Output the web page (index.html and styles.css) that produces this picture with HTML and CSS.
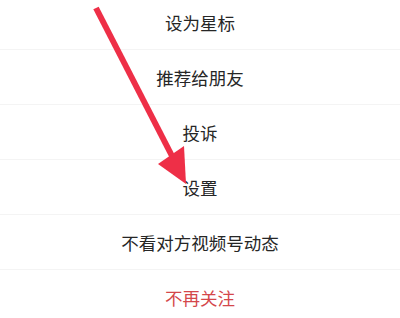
FILE: index.html
```html
<!DOCTYPE html>
<html lang="zh-CN">
<head>
  <meta charset="UTF-8">
  <meta name="viewport" content="width=device-width, initial-scale=1">
  <title>更多操作</title>
  <link rel="stylesheet" href="styles.css">
</head>
<body>
  <!-- Action sheet menu -->
  <ul class="menu">
    <li class="menu-item">设为星标</li>
    <li class="menu-item">推荐给朋友</li>
    <li class="menu-item">投诉</li>
    <li class="menu-item">设置</li>
    <li class="menu-item">不看对方视频号动态</li>
    <li class="menu-item danger">不再关注</li>
  </ul>

  <!-- Red annotation arrow pointing at "设置" -->
  <svg class="arrow" width="400" height="318" viewBox="0 0 400 318">
    <line x1="96" y1="8" x2="172" y2="156" stroke="#ee2f47" stroke-width="6" stroke-linecap="butt"/>
    <polygon points="158,164 184,146 186,184" fill="#ee2f47"/>
  </svg>
</body>
</html>
```
FILE: styles.css
```css
/* Base page */
body {
  margin: 0;
  background: #fff;
  font-family: "Noto Sans CJK SC", "Noto Sans", sans-serif;
  overflow: hidden;
}
/* Menu list, shifted so the first row is partly cut off at top */
.menu {
  list-style: none;
  margin: -5px 0 0 0;
  padding: 0;
}
/* Each action row */
.menu-item {
  height: 55px;
  display: flex;
  align-items: center;
  justify-content: center;
  font-size: 17.5px;
  color: #262626;
  border-bottom: 1px solid #f4f4f4;
  box-sizing: border-box;
}
.menu-item.danger {
  color: #d4474b;
  border-bottom: none;
}
/* Arrow overlay drawn on top of the menu */
.arrow {
  position: absolute;
  top: 0;
  left: 0;
}
```
